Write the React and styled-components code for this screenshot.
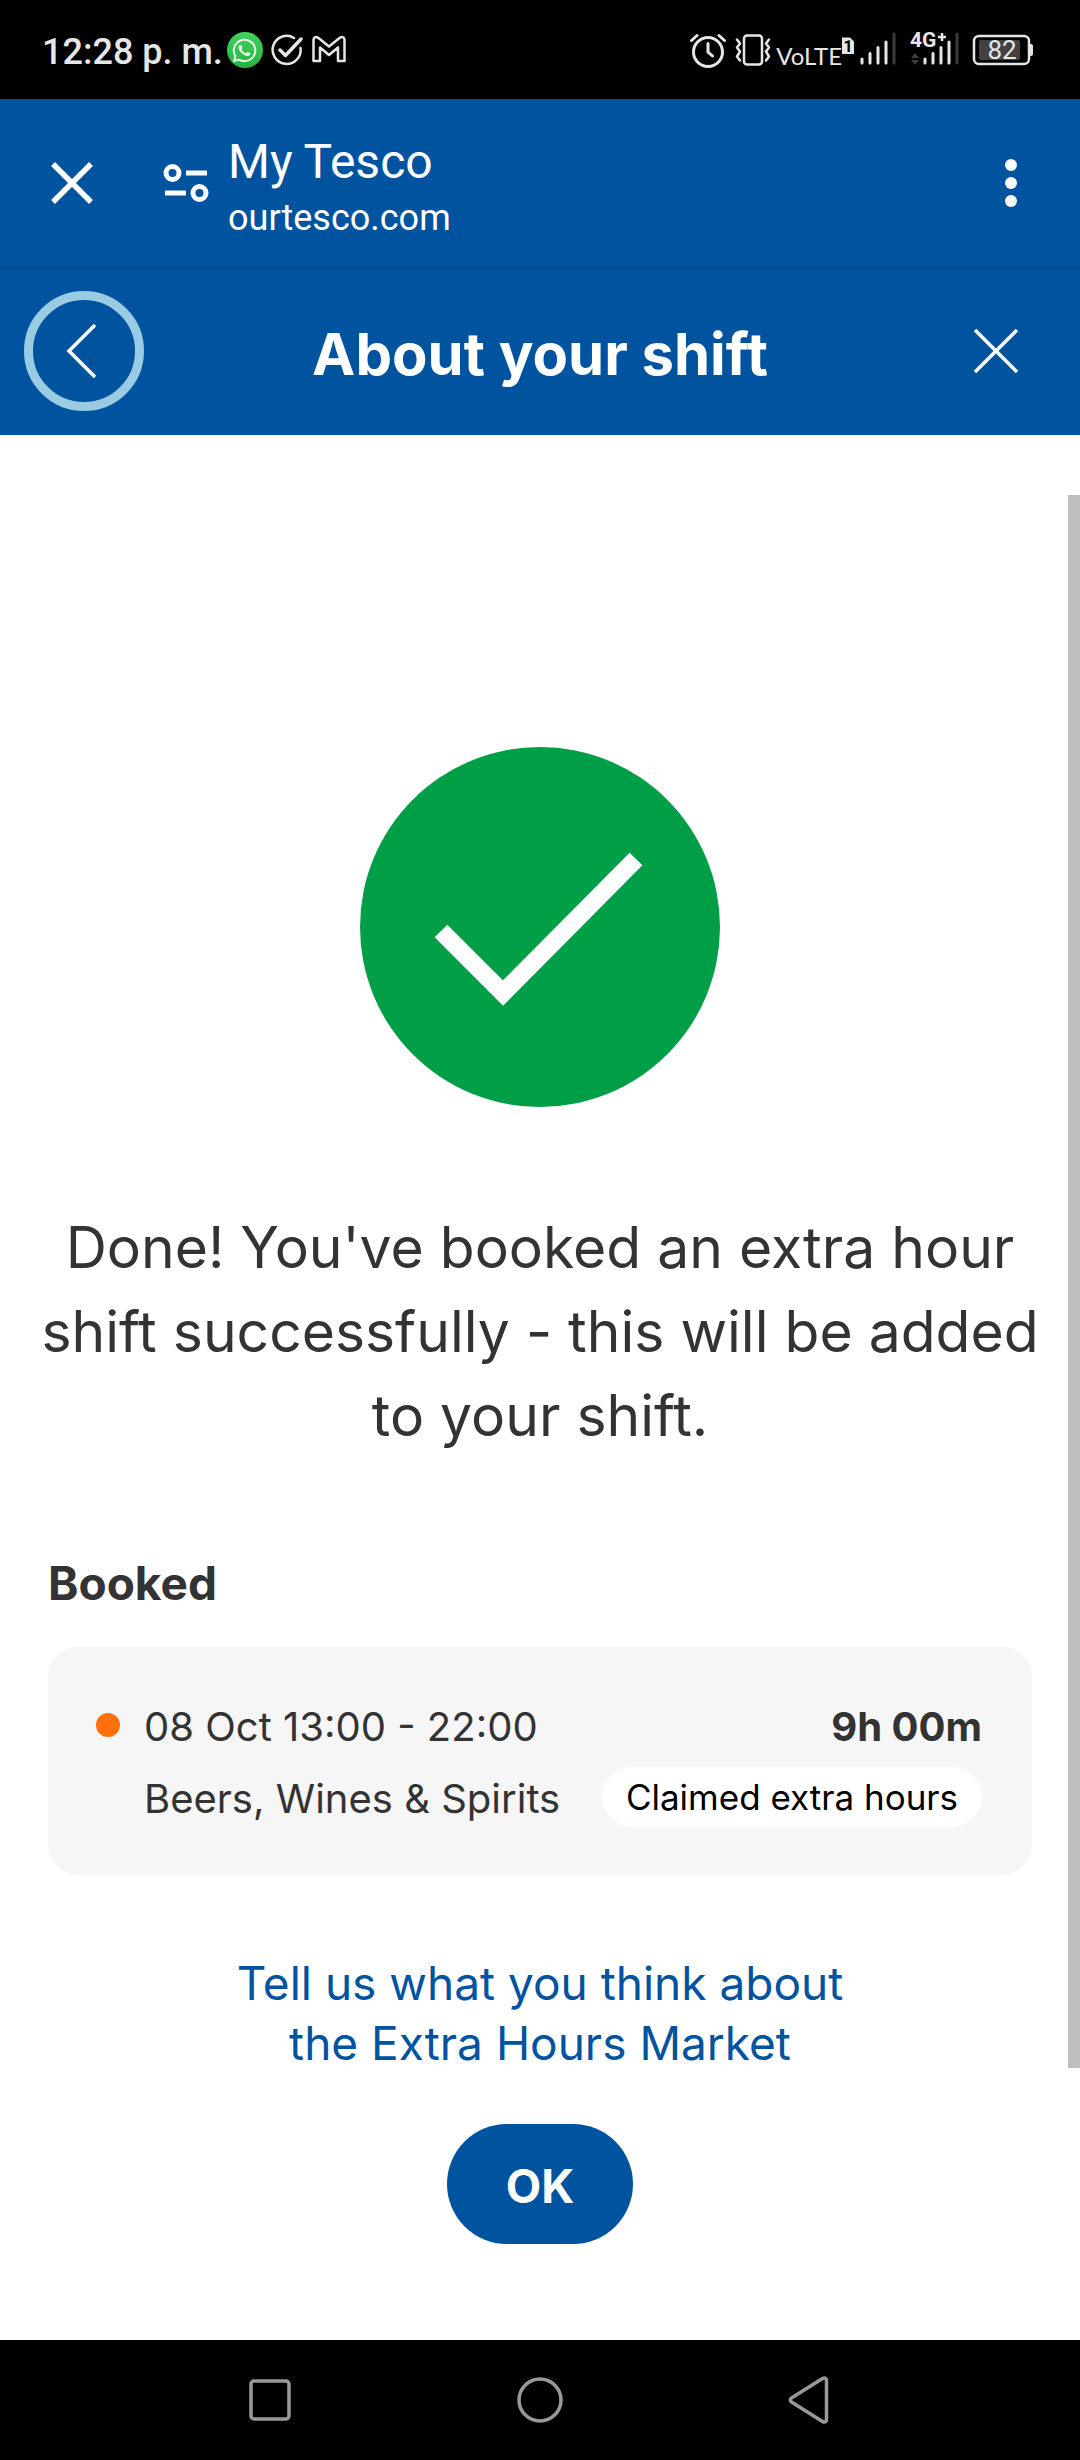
import React from "react";
import styled, { createGlobalStyle } from "styled-components";
import { FaWhatsapp } from "react-icons/fa";

const blue = "#00539f";
const ink = "#333333";
const statusInk = "#e6e6e6";

const GlobalStyle = createGlobalStyle`
  *, *::before, *::after { box-sizing: border-box; }
  body { margin: 0; background: #fff; font-family: Inter, "Liberation Sans", sans-serif; color: ${ink}; }
  h1, h2, p, ul { margin: 0; padding: 0; }
  button { border: 0; padding: 0; background: none; color: inherit; font: inherit; cursor: pointer; }
  svg { display: block; flex: none; }
`;

const Screen = styled.div`
  min-height: 100vh;
  display: flex;
  flex-direction: column;
`;

const StatusBar = styled.div`
  height: 99px;
  padding: 1px 47px 0 42px;
  display: flex;
  align-items: center;
  justify-content: space-between;
  background: #000;
  color: ${statusInk};
  font-family: Roboto, sans-serif;
`;

const StatusGroup = styled.div`
  display: flex;
  align-items: center;
  gap: ${(p) => p.$gap}px;
`;

const Clock = styled.time`
  font-size: 36px;
  line-height: 48px;
  font-weight: 500;
  padding-top: 4px;
`;

const WhatsAppBadge = styled.span`
  width: 36px;
  height: 36px;
  border-radius: 50%;
  display: grid;
  place-items: center;
  background: linear-gradient(#45d15d, #26b33f);
  color: #e9f8ec;
`;

const Network = styled.div`
  display: flex;
  align-items: center;
`;

const NetworkLabel = styled.span`
  font-family: Lato, sans-serif;
  font-size: 24px;
  line-height: 24px;
  padding-top: 12px;
`;

const BrowserBar = styled.header`
  height: 171px;
  padding: 0 21px 0 24px;
  display: flex;
  align-items: center;
  background: ${blue};
  border-bottom: 3px solid #004c92;
  color: #fff;
  font-family: Roboto, sans-serif;
`;

const IconButton = styled.button`
  width: ${(p) => p.$width || 96}px;
  height: 96px;
  display: grid;
  place-items: center;
`;

const SiteButton = styled(IconButton)`
  margin: 0 16px 0 40px;
`;

const Site = styled.div`
  flex: 1;
  display: flex;
  flex-direction: column;
  gap: 4px;
  padding-top: 6px;
`;

const SiteName = styled.p`
  font-size: 48px;
  line-height: 60px;
`;

const SiteHost = styled.p`
  font-size: 36px;
  line-height: 44px;
`;

const PageHeader = styled.header`
  height: 165px;
  padding: 0 24px 3px;
  display: grid;
  grid-template-columns: 120px 1fr 120px;
  align-items: center;
  justify-items: center;
  background: ${blue};
  color: #fff;
`;

const BackButton = styled.button`
  width: 120px;
  height: 120px;
  border: 9px solid #99cbe3;
  border-radius: 50%;
  display: grid;
  place-items: center;
`;

const PageTitle = styled.h1`
  padding-top: 6px;
  font-size: 58px;
  line-height: 72px;
  font-weight: 700;
`;

const Main = styled.main`
  position: relative;
  flex: 1;
  display: flex;
  flex-direction: column;
  align-items: center;
  padding: 312px 36px 96px;
`;

const ScrollThumb = styled.div`
  position: absolute;
  top: 60px;
  right: 0;
  bottom: 272px;
  width: 12px;
  background: #bfbfbf;
`;

const Message = styled.p`
  margin-top: 99px;
  font-size: 57px;
  line-height: 84px;
  text-align: center;
`;

const Booked = styled.section`
  align-self: stretch;
  margin-top: 95px;
  padding: 0 12px;
`;

const SectionTitle = styled.h2`
  font-size: 46px;
  line-height: 60px;
  font-weight: 700;
`;

const ShiftCard = styled.article`
  margin-top: 34px;
  padding: 44px 50px 40px 48px;
  display: flex;
  gap: 24px;
  border-radius: 30px;
  background: #f6f6f6;
`;

const ShiftDot = styled.span`
  flex: none;
  width: 24px;
  height: 24px;
  margin-top: 22px;
  border-radius: 50%;
  background: #ff6f0a;
`;

const ShiftDetails = styled.div`
  flex: 1;
`;

const ShiftRow = styled.div`
  display: flex;
  align-items: center;
  justify-content: space-between;
  font-size: 40px;
  line-height: 72px;
  white-space: nowrap;
`;

const Duration = styled.strong`
  font-weight: 700;
`;

const Tag = styled.span`
  margin-bottom: 4px;
  padding: 0 24px;
  border-radius: 30px;
  background: #fff;
  color: #000;
  font-size: 35px;
  line-height: 60px;
`;

const FeedbackLink = styled.a`
  max-width: 640px;
  margin-top: 78px;
  color: ${blue};
  font-size: 46px;
  line-height: 60px;
  text-align: center;
  text-decoration: none;
`;

const PrimaryButton = styled.button`
  height: 120px;
  margin-top: 51px;
  padding: 4px 59px 0;
  border-radius: 60px;
  background: ${blue};
  color: #fff;
  font-size: 46px;
  line-height: 60px;
  font-weight: 700;
`;

const NavBar = styled.nav`
  height: 120px;
  display: flex;
  justify-content: center;
  gap: 174px;
  align-items: center;
  background: #000;
`;

const faint = "#3c3c3c";

function SignalBars({ x }) {
  return (
    <g strokeWidth="3" strokeLinecap="round" stroke={statusInk}>
      <path d={`M${x} 59V63M${x + 8} 53.5V63M${x + 16} 47.5V63M${x + 24} 42V63`} />
      <path d={`M${x + 32} 34V63`} stroke={faint} />
    </g>
  );
}

function CheckCircleIcon() {
  return (
    <svg width="32" height="36" viewBox="271 31 32 36" fill="none" stroke={statusInk} strokeWidth="2.5" strokeLinecap="round" strokeLinejoin="round" aria-hidden="true">
      <path d="M294 37A14 14 0 1 0 300.500 47" />
      <path d="M280 49l5.500 5.500L301 38" strokeWidth="3.500" />
    </svg>
  );
}

function GmailIcon() {
  return (
    <svg width="36" height="36" viewBox="311 31 36 36" fill="none" stroke={statusInk} strokeWidth="2.5" strokeLinejoin="round" aria-hidden="true">
      <path d="M313.500 38.500Q314.500 34.500 318.500 37L329 45.500 339.500 37Q343.500 34.500 344.500 38.500V60H338V46.500L329 54 320 46.500V60H313.500Z" />
    </svg>
  );
}

function AlarmIcon() {
  return (
    <svg width="36" height="36" viewBox="690 32 36 36" fill="none" stroke={statusInk} strokeWidth="3" strokeLinecap="round" aria-hidden="true">
      <circle cx="708" cy="52" r="14.500" />
      <path d="M708 43.500V52l4.500 4M691.500 40.500L697 35.500M724.500 40.500L719 35.500" />
    </svg>
  );
}

function VibrateIcon() {
  return (
    <svg width="38" height="36" viewBox="734 32 38 36" fill="none" stroke={statusInk} strokeWidth="2.5" strokeLinecap="round" strokeLinejoin="round" aria-hidden="true">
      <rect x="744" y="35.500" width="18" height="29" rx="3" />
      <path d="M737 39.500l3 4-3 4 3 4-3 5 3 4M769 39.500l-3 4 3 4-3 4 3 5-3 4" />
    </svg>
  );
}

function SimBadge() {
  return (
    <svg width="12" height="36" viewBox="842 32 12 36" role="img" aria-label="1">
      <path d="M842 37.500h8l4 4V54h-12z" fill={statusInk} />
      <text x="848" y="52" textAnchor="middle" fontFamily="Roboto, sans-serif" fontWeight="700" fontSize="16" fill="#000">1</text>
    </svg>
  );
}

function SignalIcon() {
  return (
    <svg width="38" height="36" viewBox="860 32 38 36" fill="none" aria-hidden="true">
      <SignalBars x={862} />
    </svg>
  );
}

function MobileDataIcon() {
  return (
    <svg width="52" height="52" viewBox="908 24 52 52" fill="none">
      <text x="910" y="47" fontFamily="Roboto, sans-serif" fontWeight="700" fontSize="21" fill={statusInk}>4G</text>
      <path d="M942 33v8M938 37h8" stroke={statusInk} strokeWidth="2.5" />
      <path d="M911 58h8l-4-5zM911 60h8l-4 5z" fill={faint} />
      <SignalBars x={925} />
    </svg>
  );
}

function BatteryIcon() {
  return (
    <svg width="61" height="36" viewBox="972 31 61 36" fill="none">
      <rect x="974" y="35" width="55" height="28" rx="5" stroke={statusInk} strokeWidth="2.5" />
      <path d="M1029 43h2q2 0 2 2v8q0 2-2 2h-2z" fill={statusInk} />
      <rect x="979" y="39" width="41" height="20" rx="2" fill="#424242" />
      <text x="1002" y="58" textAnchor="middle" fontFamily="Roboto, sans-serif" fontSize="26" fill={statusInk}>82</text>
    </svg>
  );
}

export default function App() {
  return (
    <>
      <GlobalStyle />
      <Screen>
        <StatusBar>
          <StatusGroup $gap={8}>
            <StatusGroup $gap={4}>
              <Clock>12:28 p. m.</Clock>
              <WhatsAppBadge>
                <FaWhatsapp size={27} />
              </WhatsAppBadge>
            </StatusGroup>
            <CheckCircleIcon />
            <GmailIcon />
          </StatusGroup>
          <StatusGroup $gap={10}>
            <StatusGroup $gap={4}>
              <StatusGroup $gap={8}>
                <AlarmIcon />
                <VibrateIcon />
              </StatusGroup>
              <StatusGroup $gap={6}>
                <Network>
                  <NetworkLabel>VoLTE</NetworkLabel>
                  <SimBadge />
                </Network>
                <SignalIcon />
              </StatusGroup>
            </StatusGroup>
            <StatusGroup $gap={12}>
              <MobileDataIcon />
              <BatteryIcon />
            </StatusGroup>
          </StatusGroup>
        </StatusBar>

        <BrowserBar>
          <IconButton aria-label="Close tab">
            <svg width="42" height="42" viewBox="0 0 42 42" stroke="#fff" strokeWidth="5.5">
              <path d="M2 2l38 38M40 2L2 40" />
            </svg>
          </IconButton>
          <SiteButton $width={52} aria-label="Site settings">
            <svg width="48" height="40" viewBox="162 163 48 40" fill="none" stroke="#fff" strokeWidth="5">
              <circle cx="172.500" cy="173" r="6.500" />
              <path d="M186 173h21M165 193h21" />
              <circle cx="199.500" cy="193" r="6.500" />
            </svg>
          </SiteButton>
          <Site>
            <SiteName>My Tesco</SiteName>
            <SiteHost>ourtesco.com</SiteHost>
          </Site>
          <IconButton aria-label="More options">
            <svg width="12" height="48" viewBox="0 0 12 48" fill="#fff">
              <circle cx="6" cy="6" r="6" />
              <circle cx="6" cy="24" r="6" />
              <circle cx="6" cy="42" r="6" />
            </svg>
          </IconButton>
        </BrowserBar>

        <PageHeader>
          <BackButton aria-label="Back">
            <svg width="36" height="56" viewBox="66 323 36 56" fill="none" stroke="#fff" strokeWidth="3.5">
              <path d="M95 325L69 351l26 26" />
            </svg>
          </BackButton>
          <PageTitle>About your shift</PageTitle>
          <IconButton $width={120} aria-label="Close">
            <svg width="46" height="46" viewBox="0 0 46 46" stroke="#fff" strokeWidth="3.5">
              <path d="M2 2l42 42M44 2L2 44" />
            </svg>
          </IconButton>
        </PageHeader>

        <Main>
          <svg width="360" height="360" viewBox="0 0 360 360" role="img" aria-label="Success">
            <circle cx="180" cy="180" r="180" fill="#009e47" />
            <path d="M81 184l62 62 133-134" fill="none" stroke="#fff" strokeWidth="18" />
          </svg>
          <Message>
            Done! You've booked an extra hour shift successfully - this will be added to your shift.
          </Message>
          <Booked>
            <SectionTitle>Booked</SectionTitle>
            <ShiftCard>
              <ShiftDot />
              <ShiftDetails>
                <ShiftRow>
                  <span>08 Oct 13:00 - 22:00</span>
                  <Duration>9h 00m</Duration>
                </ShiftRow>
                <ShiftRow>
                  <span>Beers, Wines &amp; Spirits</span>
                  <Tag>Claimed extra hours</Tag>
                </ShiftRow>
              </ShiftDetails>
            </ShiftCard>
          </Booked>
          <FeedbackLink href="#feedback">Tell us what you think about the Extra Hours Market</FeedbackLink>
          <PrimaryButton type="button">OK</PrimaryButton>
          <ScrollThumb />
        </Main>

        <NavBar>
          <IconButton aria-label="Recent apps">
            <svg width="44" height="44" viewBox="0 0 44 44" fill="none" stroke="#999" strokeWidth="3.5">
              <rect x="3" y="3" width="38" height="38" rx="3" />
            </svg>
          </IconButton>
          <IconButton aria-label="Home">
            <svg width="48" height="48" viewBox="0 0 48 48" fill="none" stroke="#999" strokeWidth="3.5">
              <circle cx="24" cy="24" r="21" />
            </svg>
          </IconButton>
          <IconButton aria-label="Back">
            <svg width="44" height="48" viewBox="788 2376 44 48" fill="none" stroke="#999" strokeWidth="3.5" strokeLinejoin="round">
              <path d="M791.500 2398L822.500 2378.500Q826.500 2377 826.500 2380.500V2419.500Q826.500 2423 822.500 2421.500L791.500 2402Q789 2400 791.500 2398Z" />
            </svg>
          </IconButton>
        </NavBar>
      </Screen>
    </>
  );
}
